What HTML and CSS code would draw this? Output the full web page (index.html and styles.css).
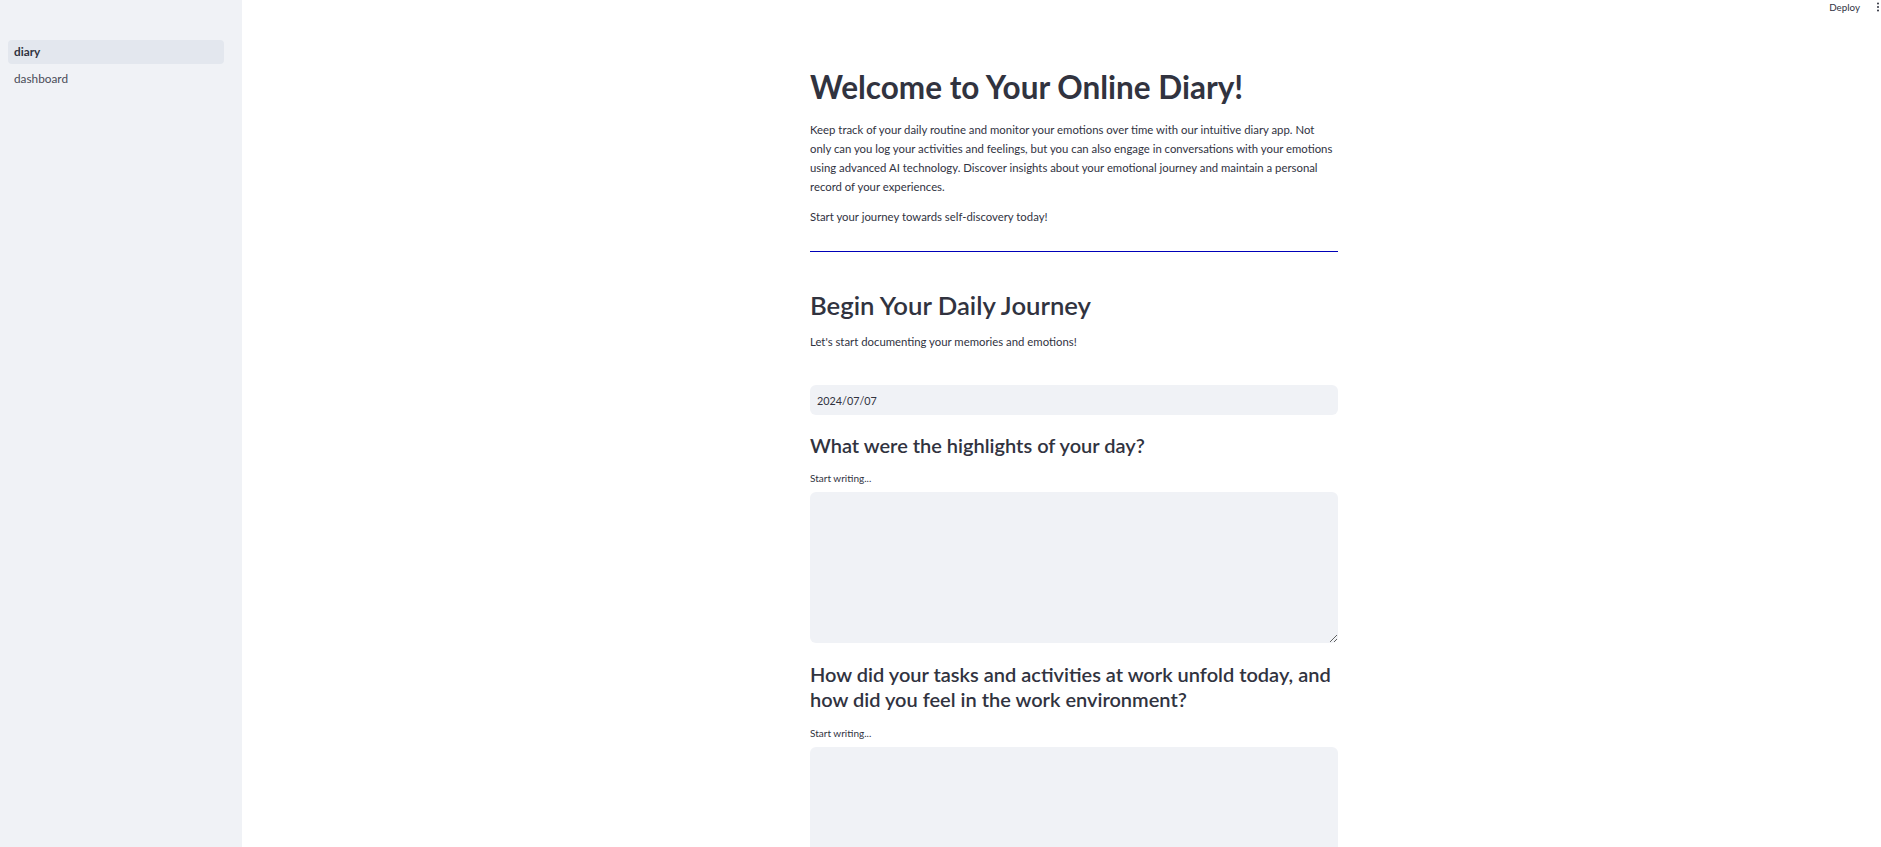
FILE: index.html
```html
<!DOCTYPE html>
<html lang="en">
<head>
<meta charset="utf-8">
<title>diary</title>
<link rel="stylesheet" href="styles.css">
</head>
<body>
<div class="app">
  <aside class="sidebar">
    <nav class="nav">
      <a class="nav-item active">diary</a>
      <a class="nav-item">dashboard</a>
    </nav>
  </aside>
  <main class="main">
    <header class="topbar">
      <span class="deploy">Deploy</span>
      <svg class="kebab" width="4" height="14" viewBox="0 0 4 14"><circle cx="2" cy="3.5" r="1"/><circle cx="2" cy="7" r="1"/><circle cx="2" cy="10.5" r="1"/></svg>
    </header>
    <section class="block">
      <h1 class="title">Welcome to Your Online Diary!</h1>
      <p class="text">Keep track of your daily routine and monitor your emotions over time with our intuitive diary app. Not only can you log your activities and feelings, but you can also engage in conversations with your emotions using advanced AI technology. Discover insights about your emotional journey and maintain a personal record of your experiences.</p>
      <p class="text">Start your journey towards self-discovery today!</p>
      <hr class="rule">
      <h2 class="subtitle">Begin Your Daily Journey</h2>
      <p class="text">Let's start documenting your memories and emotions!</p>
      <input class="date-input" type="text" value="2024/07/07">
      <h3 class="question">What were the highlights of your day?</h3>
      <label class="field-label">Start writing...</label>
      <textarea class="area"></textarea>
      <h3 class="question">How did your tasks and activities at work unfold today, and how did you feel in the work environment?</h3>
      <label class="field-label">Start writing...</label>
      <textarea class="area"></textarea>
    </section>
  </main>
</div>
</body>
</html>
```
FILE: styles.css
```css
html, body {
  margin: 0;
  padding: 0;
  background: #ffffff;
}
body {
  font-family: "Lato", "Open Sans", sans-serif;
  color: #31333f;
  overflow: hidden;
}
.app {
  display: flex;
  min-height: 100vh;
  width: 1881px;
  overflow: hidden;
}
.sidebar {
  width: 242px;
  flex-shrink: 0;
  background: #f0f2f6;
  min-height: 847px;
}
.nav {
  display: flex;
  flex-direction: column;
  gap: 3px;
  padding: 40px 18px 0 8px;
}
.nav-item {
  display: block;
  height: 24px;
  line-height: 24px;
  padding-left: 6px;
  border-radius: 4px;
  font-size: 11.8px;
  color: #4a4c58;
}
.nav-item.active {
  background: #e3e7ee;
  color: #31333f;
  font-weight: 700;
}
.main {
  flex: 1;
  display: flex;
  flex-direction: column;
  min-width: 0;
}
.topbar {
  height: 14px;
  display: flex;
  justify-content: flex-end;
  align-items: center;
  gap: 16px;
  padding-right: 1px;
}
.deploy {
  font-size: 9.8px;
  color: #31333f;
}
.kebab {
  fill: #31333f;
  flex-shrink: 0;
}
.block {
  width: 528px;
  align-self: center;
  margin-left: 25px;
  padding-top: 54px;
  display: flex;
  flex-direction: column;
}
.title {
  margin: 0 0 12px;
  font-size: 31.5px;
  line-height: 39.6px;
  font-weight: 700;
}
.text {
  margin: 0 0 11px;
  font-size: 11.35px;
  line-height: 19px;
}
.rule {
  margin: 14px 0 0;
  border: none;
  height: 1px;
  background: #0000b8;
}
.subtitle {
  margin: 37px 0 11px;
  font-size: 25.7px;
  line-height: 32.4px;
  font-weight: 600;
}
.date-input {
  margin: 23px 0 0;
  height: 30px;
  box-sizing: border-box;
  border: none;
  border-radius: 6px;
  background: #f0f2f6;
  padding: 0 7px;
  font-family: inherit;
  font-size: 10.8px;
  color: #31333f;
  outline: none;
}
.question {
  margin: 18px 0 13px;
  font-size: 20px;
  line-height: 25.2px;
  font-weight: 600;
}
.field-label {
  display: block;
  font-size: 10px;
  line-height: 14px;
  color: #31333f;
  margin-bottom: 7px;
}
.area {
  display: block;
  height: 151px;
  box-sizing: border-box;
  border: none;
  border-radius: 6px;
  background: #f0f2f6;
  resize: vertical;
  margin: 0;
  padding: 8px;
  font-family: inherit;
  outline: none;
}
.area + .question {
  margin-top: 19px;
}
```
